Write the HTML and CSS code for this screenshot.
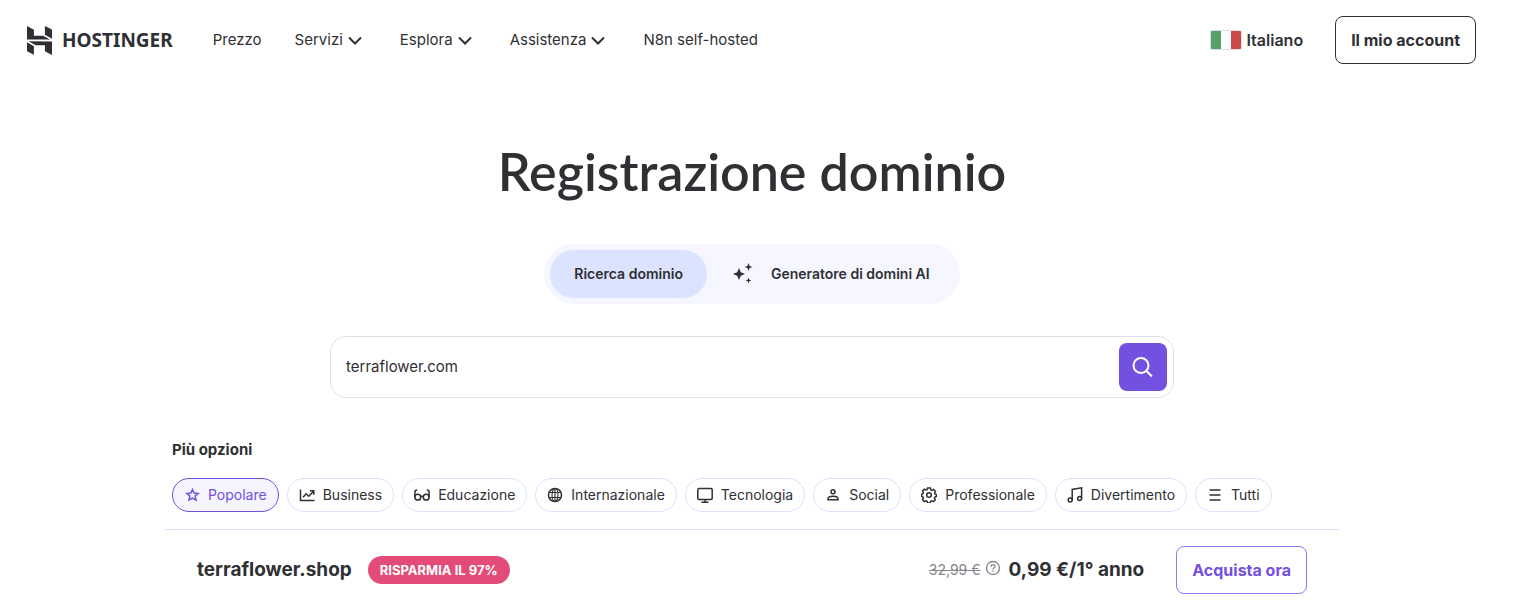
FILE: index.html
```html
<!DOCTYPE html>
<html lang="it">
<head>
    <meta charset="UTF-8">
    <meta name="viewport" content="width=device-width, initial-scale=1">
    <title>Registrazione dominio</title>
    <link rel="stylesheet" href="styles.css">
</head>
<body>
    <header class="header">
        <a class="logo" href="#">
            <svg width="25" height="29" viewBox="1.8 0 20.4 24" preserveAspectRatio="none" fill="currentColor" aria-hidden="true">
                <path d="M16.415 0v7.16l5.785 3.384V2.949L16.415 0ZM1.8 0v11.237h18.815L14.89 8.09l-7.457-.003V3.024L1.8 0Zm14.615 20.894v-5.019l-7.514-.005c.007.033-5.82-3.197-5.82-3.197l19.119.091V24l-5.785-3.106ZM1.8 13.551v7.343l5.633 2.949v-6.988L1.8 13.551Z"/>
            </svg>
            <span>HOSTINGER</span>
        </a>
        <nav class="nav">
            <a href="#">Prezzo</a>
            <button type="button">Servizi<svg class="icon-24" viewBox="0 0 24 24"><path d="M6 9.500l6 6 6-6"/></svg></button>
            <button type="button">Esplora<svg class="icon-24" viewBox="0 0 24 24"><path d="M6 9.500l6 6 6-6"/></svg></button>
            <button type="button">Assistenza<svg class="icon-24" viewBox="0 0 24 24"><path d="M6 9.500l6 6 6-6"/></svg></button>
            <a href="#">N8n self-hosted</a>
        </nav>
        <button type="button" class="language">
            <span class="flag"></span>
            Italiano
        </button>
        <a class="btn" href="#">Il mio account</a>
    </header>

    <main class="main">
        <h1>Registrazione dominio</h1>

        <div class="tabs">
            <button type="button" class="tab active">Ricerca dominio</button>
            <button type="button" class="tab">
                <svg width="24" height="24" viewBox="0 0 24 24" fill="currentColor" aria-hidden="true">
                    <path d="M8 6L9.800 10.200L14 12L9.800 13.800L8 18L6.200 13.800L2 12L6.200 10.200Z"/>
                    <path d="M17.500 1L18.600 3.900L21.500 5L18.600 6.100L17.500 9L16.400 6.100L13.500 5L16.400 3.900Z"/>
                    <path d="M17.500 15.500L18.300 17.700L20.500 18.500L18.300 19.300L17.500 21.500L16.700 19.300L14.500 18.500L16.700 17.700Z"/>
                </svg>
                Generatore di domini AI
            </button>
        </div>

        <form class="search">
            <input type="text" value="terraflower.com" aria-label="Nome del dominio">
            <button type="submit" aria-label="Cerca">
                <svg width="24" height="24" viewBox="0 0 24 24"><circle cx="10" cy="10.500" r="7.500"/><path d="M15.500 16l5.500 5.500"/></svg>
            </button>
        </form>

        <section class="options">
            <h2>Più opzioni</h2>
            <div class="chips">
                <button type="button" class="chip active">
                    <svg viewBox="0 0 16 16"><path d="M8.500 2.500l1.600 3.600 4 .4-3 2.600.9 3.900-3.500-2L5 13l.9-3.900-3-2.600 4-.4z"/></svg>
                    Popolare
                </button>
                <button type="button" class="chip">
                    <svg viewBox="0 0 16 16"><path d="M1.500 2.500v11h14M4 10.200l3.200-3.400 2.600 2.400 4.700-5M10.800 3.800h4v4"/></svg>
                    Business
                </button>
                <button type="button" class="chip">
                    <svg viewBox="0 0 16 16"><circle cx="3.800" cy="10.200" r="2.900"/><circle cx="12.200" cy="10.200" r="2.900"/><path d="M6.700 9.600q1.300-.8 2.600 0M.9 10V5q0-2 2.300-2M15.100 10V5q0-2-2.300-2"/></svg>
                    Educazione
                </button>
                <button type="button" class="chip">
                    <svg viewBox="0 0 16 16"><circle cx="8" cy="8" r="6.500"/><g stroke-width="1.100"><ellipse cx="8" cy="8" rx="3" ry="6.500"/><path d="M8 1.500v13M2.500 5.500h11M2.500 10.500h11"/></g></svg>
                    Internazionale
                </button>
                <button type="button" class="chip">
                    <svg viewBox="0 0 16 16"><rect x=".8" y="1.500" width="14.400" height="11" rx="1.200"/><path d="M8 12.500v2.500M4.500 15.200h7"/></svg>
                    Tecnologia
                </button>
                <button type="button" class="chip">
                    <svg viewBox="0 0 16 16"><circle cx="8" cy="4.800" r="2"/><path d="M3 12.800v-1q0-2.600 5-2.600t5 2.600v1z"/></svg>
                    Social
                </button>
                <button type="button" class="chip">
                    <svg viewBox="0 0 16 16"><circle cx="8" cy="8" r="2.300"/><path d="M6.600 1h2.800l.5 1.900 1 .4 1.700-.9 1.900 1.900-.9 1.700.4 1 1.400.5v1.900l-1.600.7-.4 1 .9 1.800-1.800 1.800-1.800-.9-1 .4-.5 1.800H6.600l-.5-1.800-1-.4-1.800.9-1.800-1.800.9-1.800-.4-1L.7 9.400V7.300L2 6.700l.4-1-.9-1.700 1.900-1.900 1.700.9 1-.4z"/></svg>
                    Professionale
                </button>
                <button type="button" class="chip">
                    <svg viewBox="0 0 16 16"><circle cx="3.200" cy="13" r="2"/><circle cx="12.600" cy="11.500" r="2"/><path d="M5.200 13V2.500l9.400-1.700v10.700"/></svg>
                    Divertimento
                </button>
                <button type="button" class="chip">
                    <svg viewBox="0 0 16 16"><path d="M2.500 3h11M2.500 8h11M2.500 13h11"/></svg>
                    Tutti
                </button>
            </div>
        </section>

        <div class="result">
            <span class="domain">terraflower.shop</span>
            <span class="badge">RISPARMIA IL 97%</span>
            <span class="price">
                <del>32,99 €</del>
                <svg class="help" width="16" height="16" viewBox="0 0 16 16" aria-hidden="true"><circle cx="8" cy="8" r="6.500"/><path d="M6 6.700q0-2 2-2t2 1.800q0 .9-1 1.500t-1 1.400M8 10.500v1.300"/></svg>
                <strong>0,99 €/1° anno</strong>
            </span>
            <button type="button" class="btn buy">Acquista ora</button>
        </div>
    </main>
</body>
</html>
```
FILE: styles.css
```css
* {
    box-sizing: border-box;
}
body {
    margin: 0;
    padding-right: 9px;
    font-family: Inter, sans-serif;
    font-size: 15px;
    line-height: 24px;
    color: #2f3033;
    background-color: #fff;
}
a {
    color: inherit;
    text-decoration: none;
}
button, input {
    font: inherit;
    color: inherit;
    background: none;
    border: 0;
    padding: 0;
}
button {
    cursor: pointer;
}
svg {
    flex-shrink: 0;
}

/* Header */
.header {
    display: flex;
    align-items: center;
    height: 80px;
    padding: 0 28px 0 27px;
}
.logo {
    display: flex;
    align-items: center;
    gap: 10px;
    font-family: "Noto Sans", sans-serif;
    font-size: 19px;
    font-weight: 700;
}
.nav {
    display: flex;
    flex: 1;
    gap: 33px;
    margin-left: 40px;
    white-space: nowrap;
}
.nav button {
    display: flex;
    align-items: center;
}
.icon-24 {
    width: 24px;
    height: 24px;
    fill: none;
    stroke: currentColor;
    stroke-width: 2;
}
.language {
    display: flex;
    align-items: center;
    gap: 4px;
    margin-right: 32px;
    font-size: 16px;
    font-weight: 600;
}
.flag {
    width: 32px;
    height: 20px;
    border: 1px solid #dddde8;
    border-radius: 2px;
    background: linear-gradient(90deg, #55a069 33%, #fff 33%, #fff 67%, #ca4a48 67%);
}
.btn {
    display: flex;
    align-items: center;
    height: 48px;
    padding: 0 15px;
    border: 1px solid #2f3033;
    border-radius: 8px;
    font-size: 16px;
    font-weight: 700;
    white-space: nowrap;
}

/* Search */
.main {
    display: flex;
    flex-direction: column;
    align-items: center;
    max-width: 1176px;
    margin: 0 auto;
}
h1 {
    margin: 55px 0 37px;
    font-family: Lato, sans-serif;
    font-size: 52px;
    font-weight: 600;
    line-height: 72px;
}
.tabs {
    display: flex;
    padding: 6px;
    border-radius: 30px;
    background-color: #f5f6ff;
}
.tab {
    display: flex;
    align-items: center;
    gap: 16px;
    height: 48px;
    padding: 0 24px;
    border-radius: 24px;
    font-size: 14px;
    font-weight: 600;
}
.tab.active {
    background-color: #dbe3fe;
}
.search {
    display: flex;
    width: 100%;
    max-width: 844px;
    margin-top: 32px;
    padding: 6px;
    border: 1px solid #dfdfea;
    border-radius: 16px;
}
.search input {
    flex: 1;
    padding: 0 9px;
    outline: none;
}
.search button {
    display: flex;
    align-items: center;
    justify-content: center;
    width: 48px;
    height: 48px;
    border-radius: 8px;
    background-color: #7350df;
}
.search svg {
    fill: none;
    stroke: #fff;
    stroke-width: 2;
}

/* Categories */
.options {
    width: 100%;
    padding: 40px 8px 17px;
    border-bottom: 1px solid #dbe2f5;
}
.options h2 {
    margin: 0 0 16px;
    font-size: 15px;
    font-weight: 700;
    line-height: 24px;
}
.chips {
    display: flex;
    flex-wrap: wrap;
    gap: 8px;
}
.chip {
    display: flex;
    align-items: center;
    gap: 8px;
    height: 34px;
    padding: 0 11px;
    border: 1px solid #dae2ff;
    border-radius: 17px;
    font-size: 14px;
}
.chip.active {
    border-color: #7350df;
    background-color: #f5f5ff;
    color: #7350df;
}
.chip svg {
    width: 16px;
    height: 16px;
    fill: none;
    stroke: currentColor;
    stroke-width: 1.5;
}

/* Result row */
.result {
    display: flex;
    align-items: center;
    gap: 16px;
    width: 100%;
    padding: 16px 33px;
}
.domain, .price strong {
    font-size: 19px;
    font-weight: 700;
}
.badge {
    padding: 2px 12px;
    border-radius: 14px;
    background-color: #e34b78;
    color: #fff;
    font-size: 13px;
    font-weight: 700;
}
.price {
    display: flex;
    align-items: center;
    gap: 8px;
    margin-left: auto;
}
.price del {
    color: #85868c;
    font-size: 14px;
}
.help {
    margin: 0 0 4px -4px;
    fill: none;
    stroke: #85868c;
    stroke-width: 1.3;
}
.buy {
    margin-left: 16px;
    border-color: #9078ef;
    color: #7350df;
}
```
